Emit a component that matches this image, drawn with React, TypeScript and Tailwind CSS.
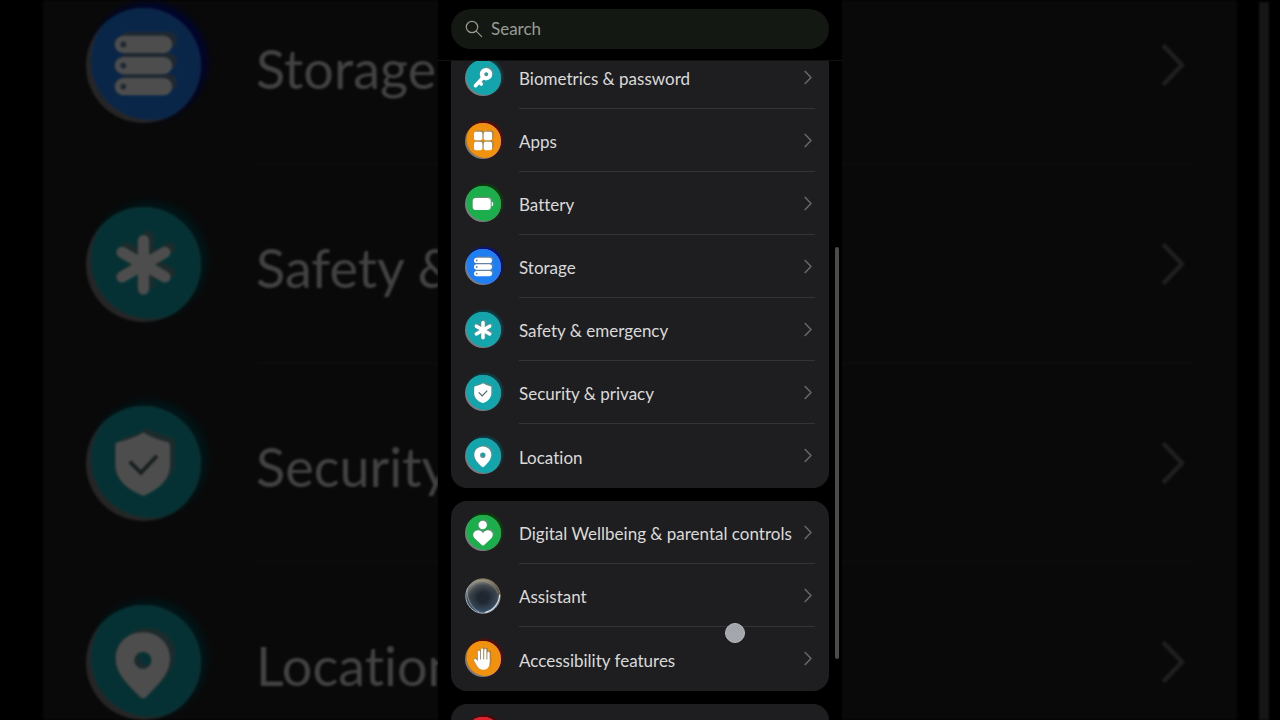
import { useId } from 'react'
import type { ReactNode } from 'react'

type IconName =
  | 'key' | 'apps' | 'battery' | 'storage' | 'safety' | 'shield'
  | 'pin' | 'wellbeing' | 'assistant' | 'hand' | 'red'

type Item = { icon: IconName; label: string }

const deviceItems: Item[] = [
  { icon: 'key', label: 'Biometrics & password' },
  { icon: 'apps', label: 'Apps' },
  { icon: 'battery', label: 'Battery' },
  { icon: 'storage', label: 'Storage' },
  { icon: 'safety', label: 'Safety & emergency' },
  { icon: 'shield', label: 'Security & privacy' },
  { icon: 'pin', label: 'Location' },
]

const assistItems: Item[] = [
  { icon: 'wellbeing', label: 'Digital Wellbeing & parental controls' },
  { icon: 'assistant', label: 'Assistant' },
  { icon: 'hand', label: 'Accessibility features' },
]

// the side strip is only wide enough for the start of each label
const backdropItems: Item[] = [
  { icon: 'storage', label: 'Storage' },
  { icon: 'safety', label: 'Safety &' },
  { icon: 'shield', label: 'Security' },
  { icon: 'pin', label: 'Location' },
]

const TEAL = { fill: '#14a4ab', glow: '#00464f' }
const GREEN = { fill: '#1cae4c', glow: '#004a00' }
const ORANGE = { fill: '#f0920f', glow: '#6a0500' }

const colors: Record<IconName, { fill: string; glow: string }> = {
  key: TEAL,
  apps: ORANGE,
  battery: GREEN,
  storage: { fill: '#1f7ff0', glow: '#000f96' },
  safety: TEAL,
  shield: TEAL,
  pin: TEAL,
  wellbeing: GREEN,
  assistant: { fill: '#26303a', glow: '#2a1c08' },
  hand: ORANGE,
  red: { fill: '#e0202c', glow: '#5a0000' },
}

// glyphs live in a 36x36 box and take their colour from the parent group
const glyphs: Record<IconName, ReactNode> = {
  key: (
    <>
      <path fillRule="evenodd" d="M21 8a6.200 6.200 0 1 1 0 12.400a6.200 6.200 0 0 1 0-12.400Zm.2 4.200a2 2 0 1 0 0 4a2 2 0 0 0 0-4Z" />
      <path d="M18 17.500 10.500 25.700M14 22l2.200 2" fill="none" stroke="currentColor" strokeWidth="3.600" strokeLinecap="round" />
    </>
  ),
  apps: (
    <>
      <rect x="9" y="8.700" width="8.400" height="8.600" rx="2" />
      <rect x="18.700" y="8.700" width="8.400" height="8.600" rx="2" />
      <rect x="9" y="18.700" width="8.400" height="8.600" rx="2" />
      <rect x="18.700" y="18.700" width="8.400" height="8.600" rx="2" />
    </>
  ),
  battery: (
    <>
      <rect x="7.700" y="12" width="18" height="12" rx="3" />
      <path d="M26.700 15.500q1.500.5 1.500 2.500t-1.500 2.500Z" />
    </>
  ),
  storage: (
    <path
      fillRule="evenodd"
      d="M11.700 8.700h12.600a2.700 2.700 0 0 1 0 5.400H11.700a2.700 2.700 0 0 1 0-5.400Zm0 1.800a.9.9 0 1 0 0 1.800a.9.9 0 0 0 0-1.800ZM11.700 15.300h12.600a2.700 2.700 0 0 1 0 5.400H11.700a2.700 2.700 0 0 1 0-5.400Zm0 1.800a.9.9 0 1 0 0 1.800a.9.9 0 0 0 0-1.800ZM11.700 21.900h12.600a2.700 2.700 0 0 1 0 5.400H11.700a2.700 2.700 0 0 1 0-5.400Zm0 1.800a.9.9 0 1 0 0 1.800a.9.9 0 0 0 0-1.800Z"
    />
  ),
  safety: (
    <path d="M18 10.500v15.200M11.300 14.200l13.400 7.700M24.700 14.200l-13.400 7.700" fill="none" stroke="currentColor" strokeWidth="3.500" strokeLinecap="round" />
  ),
  shield: (
    <path d="M18 8.300c2 1.300 4.700 2.300 7.400 3q.9.300.9 1.200v5.900c0 4.900-4 8-8.300 9.700c-4.500-1.700-8.800-4.800-8.800-9.700v-5.900q0-.9.900-1.200c3-.7 5.700-1.700 7.900-3Z" />
  ),
  pin: (
    <path fillRule="evenodd" d="M17.800 8.500c4.900 0 8.500 3.600 8.500 8.200c0 5.200-4.200 8.600-7.200 11.900q-1.200 1.300-2.400 0c-3-3.300-7.400-6.700-7.400-11.900c0-4.600 3.600-8.200 8.500-8.200Zm0 6.100a2.700 2.700 0 1 0 0 5.400a2.700 2.700 0 0 0 0-5.400Z" />
  ),
  wellbeing: (
    <>
      <circle cx="17.700" cy="10" r="4.200" />
      <path d="M18 18.200c1.800-3 5-3.500 7.200-2.400c3 1.600 3.300 5 1.400 7.100l-7.400 7.200q-1.200 1-2.400 0l-7.400-7.200c-1.900-2.100-1.600-5.500 1.400-7.100c2.200-1.100 5.400-.6 7.200 2.400Z" />
    </>
  ),
  assistant: null,
  hand: (
    <>
      <path d="M14 10.800v9M17.100 8.600v10M20.300 9.100v10M23.500 12v8" fill="none" stroke="currentColor" strokeWidth="2.200" strokeLinecap="round" />
      <path d="M12.900 18.500h11.700v3.500c0 4-2.300 6.700-5.800 6.700c-3.500 0-5.200-1.500-6.700-4l-2.900-5c-.7-1.300.9-2.500 2.100-1.300l1.600 1.700Z" />
    </>
  ),
  red: null,
}

function ItemIcon({ name, className }: { name: IconName; className: string }) {
  const id = useId()
  const { fill, glow } = colors[name]

  if (name === 'assistant') {
    return (
      <svg viewBox="0 0 36 36" className={className} aria-hidden="true">
        <defs>
          <radialGradient id={`${id}-core`} cx="0.5" cy="0.55" r="0.5">
            <stop offset="0.3" stopColor="#1f2830" />
            <stop offset="0.75" stopColor="#27323e" stopOpacity="0.6" />
            <stop offset="1" stopColor="#27323e" stopOpacity="0" />
          </radialGradient>
          <linearGradient id={`${id}-orb`} x1="0.4" y1="0" x2="0.6" y2="1">
            <stop offset="0" stopColor="#a09a8d" />
            <stop offset="0.45" stopColor="#4d5358" />
            <stop offset="1" stopColor="#4d7296" />
          </linearGradient>
          <linearGradient id={`${id}-rim`} x1="0" y1="1" x2="1" y2="0">
            <stop offset="0" stopColor="#c3ccd4" />
            <stop offset="0.5" stopColor="#8494a1" />
            <stop offset="0.8" stopColor="#8a744e" />
            <stop offset="1" stopColor="#5e4a2b" />
          </linearGradient>
        </defs>
        <circle cx="18" cy="18" r="17" fill={`url(#${id}-orb)`} />
        <circle cx="18" cy="18" r="17" fill={`url(#${id}-core)`} />
        <circle cx="18" cy="18" r="17.200" fill="none" stroke={`url(#${id}-rim)`} strokeWidth="1" />
        <path d="M2.500 10c-1.500 9 3 20 12 24" fill="none" stroke="#b9c4cf" strokeWidth="0.900" opacity="0.6" />
        <path d="M12 2.500c10-.5 18 5 21 13" fill="none" stroke="#a8956c" strokeWidth="0.900" opacity="0.6" />
        <path d="M34.600 17c-.3 8-6 15-14 17.300" fill="none" stroke="#dfe7ee" strokeWidth="1.200" strokeLinecap="round" />
      </svg>
    )
  }

  return (
    <svg viewBox="0 0 36 36" className={className} overflow="visible" aria-hidden="true">
      <defs>
        <clipPath id={`${id}-disc`}>
          <circle cx="18" cy="18" r="18" />
        </clipPath>
        <radialGradient id={`${id}-glow`}>
          <stop offset="0.83" stopColor={glow} />
          <stop offset="1" stopColor={glow} stopOpacity="0" />
        </radialGradient>
      </defs>
      <circle cx="19.700" cy="16.600" r="20" fill={`url(#${id}-glow)`} />
      <circle cx="18" cy="18" r="18" fill="#7c7c80" />
      <g clipPath={`url(#${id}-disc)`}>
        <circle cx="20.300" cy="16.400" r="18.600" fill={fill} />
      </g>
      <g transform="translate(1.6 -1.3)" className="text-[#7d8585]" fill="currentColor" opacity="0.75">
        {glyphs[name]}
      </g>
      <g className="text-white" fill="currentColor">
        {glyphs[name]}
      </g>
      {name === 'shield' && (
        <path d="m13.700 17.400 3.500 3.500 5-5.300" fill="none" stroke="#4f6668" strokeWidth="1.200" />
      )}
    </svg>
  )
}

function Chevron({ className }: { className: string }) {
  return (
    <svg viewBox="0 0 8 15" className={className} fill="none" stroke="#68686b" strokeWidth="1.500" aria-hidden="true">
      <path d="m.7.9 6.300 6.600-6.300 6.600" strokeLinejoin="round" />
    </svg>
  )
}

function SettingsCard({ items }: { items: Item[] }) {
  return (
    <ul className="rounded-2xl bg-[#1e1e20] pb-px">
      {items.map((item, i) => (
        <li key={item.label}>
          <button type="button" className="flex h-[63px] w-full items-center gap-[18px] px-3.5 text-left">
            <ItemIcon name={item.icon} className="size-9 shrink-0" />
            <span
              className={
                i < items.length - 1
                  ? 'flex h-full min-w-0 flex-1 items-center border-b border-[#343436]'
                  : 'flex h-full min-w-0 flex-1 items-center'
              }
            >
              <span className="flex-1 whitespace-nowrap pt-1 text-[17px] leading-6 text-[#dadadc]">{item.label}</span>
              <Chevron className="mr-[3px] h-[15px] w-2 shrink-0" />
            </span>
          </button>
        </li>
      ))}
    </ul>
  )
}

function Backdrop() {
  return (
    <div className="absolute inset-0 flex overflow-hidden opacity-30 blur-[1px]" aria-hidden="true">
      <div className="ml-[43px] flex-1 bg-[#1e1e20]">
        <div className="-mt-[34px]">
          {backdropItems.map(item => (
            <div key={item.label} className="flex h-[199px] items-center gap-[55px] pl-[43px] pr-[42px]">
              <ItemIcon name={item.icon} className="size-[115px] shrink-0" />
              <div className="flex h-full flex-1 items-center justify-between border-b-2 border-[#2b2b2d]">
                <span className="w-[182px] overflow-hidden whitespace-nowrap pt-2 text-[54px] leading-[68px] text-[#dadadc]">
                  {item.label}
                </span>
                <Chevron className="mr-2.5 h-[46px] w-6 shrink-0" />
              </div>
            </div>
          ))}
        </div>
      </div>
      <div className="ml-[22px] mr-[11px] mt-0.5 w-2.5 bg-[#4a4a4c]" />
    </div>
  )
}

export default function App() {
  return (
    <div className="relative flex h-screen justify-center overflow-hidden bg-black font-['Lato',sans-serif] [font-variant-ligatures:none]">
      <Backdrop />

      <div className="relative flex w-[404px] flex-col overflow-hidden bg-black">
        <header className="border-b border-[#121212] px-[13px] pb-[11px] pt-[9px]">
          <label className="flex h-10 items-center gap-2 rounded-full bg-[#141813] px-3.5">
            <svg viewBox="0 0 18 18" className="size-[18px] shrink-0" fill="none" stroke="#98998f" strokeWidth="1.200" aria-hidden="true">
              <circle cx="7" cy="7" r="5.700" />
              <path d="m11.200 11.200 5.500 5.500" strokeLinecap="round" />
            </svg>
            <input
              type="text"
              aria-label="Search"
              placeholder="Search"
              className="min-w-0 flex-1 bg-transparent text-[17px] leading-6 outline-none placeholder:text-[#999b98]"
            />
          </label>
        </header>

        <main className="min-h-0 flex-1 overflow-hidden px-[13px]">
          <div className="-mt-[15px] flex flex-col gap-[13px]">
            <SettingsCard items={deviceItems} />
            <SettingsCard items={assistItems} />
            <div className="h-[63px] rounded-2xl bg-[#1e1e20] px-3.5 py-[13px]">
              <ItemIcon name="red" className="size-9" />
            </div>
          </div>
        </main>

        {/* scroll thumb and touch point float above the list */}
        <div className="absolute right-[3px] top-[247px] h-[412px] w-1 rounded-full bg-[#4b4b4d]" />
        <div className="absolute left-[287px] top-[623px] size-5 rounded-full border border-[#b9bbc2] bg-[#a4a6ae]" />
      </div>
    </div>
  )
}
